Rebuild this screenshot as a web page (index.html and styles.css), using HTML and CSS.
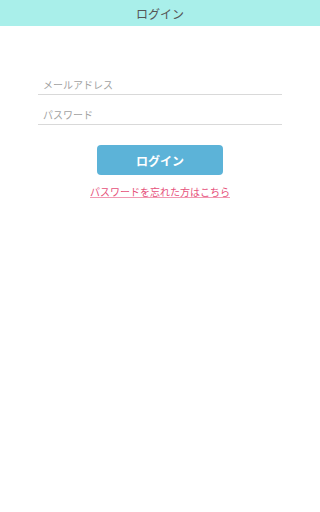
FILE: index.html
```html
<!DOCTYPE html>
<html lang="ja">
<head>
<meta charset="utf-8">
<meta name="viewport" content="width=device-width, initial-scale=1">
<title>ログイン</title>
<link rel="stylesheet" href="styles.css">
</head>
<body>
<header class="header">ログイン</header>
<main class="main">
  <form class="form">
    <input class="field" type="email" placeholder="メールアドレス">
    <input class="field" type="password" placeholder="パスワード">
    <button class="btn" type="button">ログイン</button>
    <a class="link" href="#">パスワードを忘れた方はこちら</a>
  </form>
</main>
</body>
</html>
```
FILE: styles.css
```css
html, body {
  margin: 0;
  padding: 0;
  background: #ffffff;
  font-family: "Noto Sans CJK JP", "Noto Sans", sans-serif;
}
.header {
  height: 26px;
  background: #a9efea;
  color: #555555;
  font-size: 12px;
  display: flex;
  align-items: center;
  justify-content: center;
}
.main {
  padding: 39px 11.9% 0;
}
.form {
  display: flex;
  flex-direction: column;
  align-items: center;
}
.field {
  width: 100%;
  box-sizing: border-box;
  height: 30px;
  border: none;
  border-bottom: 1px solid #d9d9d9;
  padding: 9px 5px 0;
  font-family: inherit;
  font-size: 10px;
  color: #333;
  outline: none;
  background: transparent;
}
.field::placeholder {
  color: #a2a2a2;
}
.btn {
  margin-top: 20px;
  width: 51.3%;
  height: 30px;
  border: none;
  border-radius: 4px;
  background: #5cb3d8;
  color: #ffffff;
  font-family: inherit;
  font-size: 12px;
  font-weight: bold;
}
.link {
  margin-top: 10px;
  color: #e6507a;
  font-size: 10px;
  line-height: 14px;
  text-decoration: underline;
  text-decoration-color: #f19ab3;
}
```
